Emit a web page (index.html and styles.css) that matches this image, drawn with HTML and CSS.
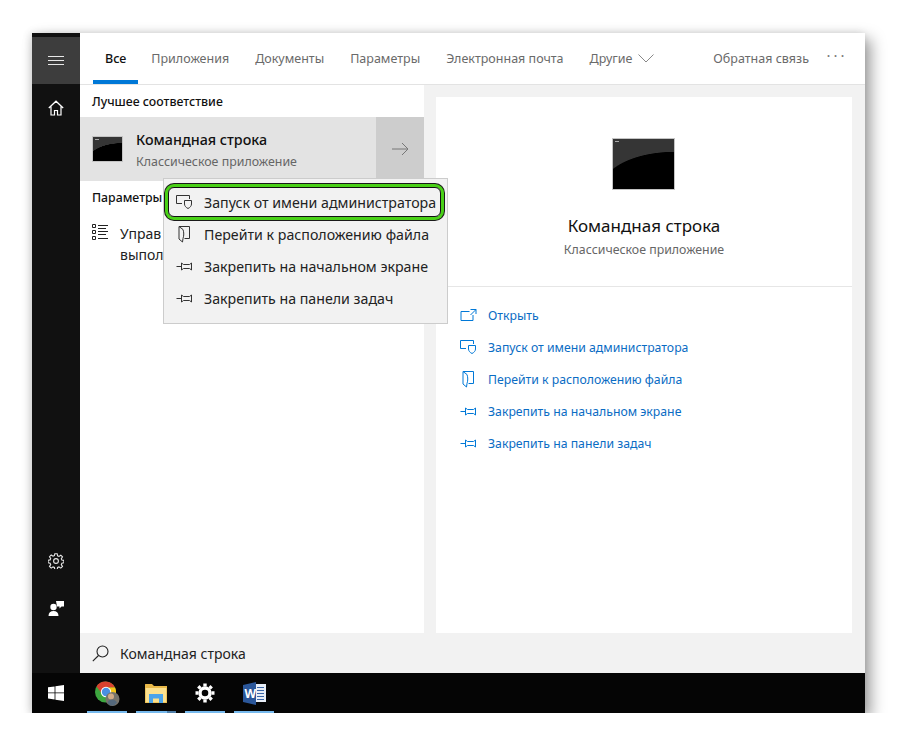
FILE: index.html
```html
<!DOCTYPE html>
<html lang="ru">
<head>
    <meta charset="UTF-8">
    <meta name="viewport" content="width=device-width, initial-scale=1.0">
    <title>Поиск</title>
    <link rel="stylesheet" href="styles.css">
</head>
<body>
<div class="window">
    <div class="upper">
        <nav class="rail">
            <div class="rail-top">
                <div class="burger">
                    <svg width="16" height="10" viewBox="0 0 16 10"><path d="M0 .5h16M0 4.5h16M0 8.5h16" stroke="#e8e8e8" fill="none"/></svg>
                </div>
                <div class="rail-icon">
                    <svg width="16" height="16" viewBox="0 0 16 16" fill="none" stroke="#fff" stroke-width="1.2"><path d="M.8 8 8 1.2 15.2 8M3 6.5V15h3.5v-4.5h3V15H13V6.5"/></svg>
                </div>
            </div>
            <div class="rail-bottom">
                <div class="rail-icon">
                    <svg width="16" height="16" viewBox="0 0 16 16" fill="none" stroke="#e8e8e8" stroke-width="1.1"><circle cx="8" cy="8" r="2.4"/><path d="M6.8.7h2.4l.4 2.1 1.4.6 1.8-1.2 1.7 1.7-1.2 1.8.6 1.4 2 .3v2.4l-2 .4-.6 1.4 1.2 1.8-1.7 1.7-1.8-1.2-1.4.6-.4 2H6.8l-.4-2-1.4-.6-1.8 1.2-1.7-1.7 1.2-1.8-.6-1.4-2-.4V7.2l2-.3.6-1.4-1.2-1.8 1.7-1.7L5 3.2l1.4-.6z"/></svg>
                </div>
                <div class="rail-icon">
                    <svg width="16" height="16" viewBox="0 0 16 16" fill="#fff"><circle cx="5.500" cy="7" r="3.200"/><path d="M.5 16c0-3.400 2-5 5-5s5 1.600 5 5zM8 1h8v5.500h-2.500L11.500 8.500V6.500H9z"/></svg>
                </div>
            </div>
        </nav>
        <div class="main">
            <header class="tabs">
                <div class="tab active">Все</div>
                <div class="tab">Приложения</div>
                <div class="tab">Документы</div>
                <div class="tab">Параметры</div>
                <div class="tab">Электронная почта</div>
                <div class="tab more">Другие
                    <svg width="16" height="9" viewBox="0 0 16 9" fill="none" stroke="#888"><path d="M.5.5 8 8 15.500.5"/></svg>
                </div>
                <div class="tab feedback">Обратная связь</div>
                <div class="dots">···</div>
            </header>
            <div class="panes">
                <section class="results">
                    <h2 class="group-title">Лучшее соответствие</h2>
                    <div class="best">
                        <div class="best-info">
                            <div class="cmd-icon small"></div>
                            <div class="best-text">
                                <div class="best-name">Командная строка</div>
                                <div class="best-kind">Классическое приложение</div>
                            </div>
                        </div>
                        <div class="best-arrow">
                            <svg width="17" height="14" viewBox="0 0 17 14" fill="none" stroke="#777"><path d="M0 7h16M10 1l6 6-6 6"/></svg>
                        </div>
                    </div>
                    <h2 class="group-title second">Параметры</h2>
                    <div class="setting">
                        <svg class="setting-icon" width="16" height="16" viewBox="0 0 16 16" fill="none" stroke="#222"><path d="M.5.5h3v3h-3zM.5 6.500h3v3h-3zM.5 12.500h3v3h-3zM6 1.500h10M6 4.500h8M6 7.500h10M6 10.500h8M6 14.500h10"/></svg>
                        <div class="setting-text">Управ<br>выпол</div>
                    </div>
                </section>
                <section class="detail">
                    <div class="card">
                        <div class="cmd-icon large"></div>
                        <div class="card-name">Командная строка</div>
                        <div class="card-kind">Классическое приложение</div>
                        <ul class="actions">
                            <li>
                                <svg width="16" height="12" viewBox="0 0 16 12" fill="none" stroke="#0078d7"><path d="M9 2.500H.5v9h12V6M10 .5h5.500V5M15.500.5 10 6"/></svg>
                                Открыть
                            </li>
                            <li>
                                <svg width="17" height="14" viewBox="0 0 17 14" fill="none" stroke="#0078d7"><path d="M6 8.500H.5v-8h13V4M8.500 5.500h7v3.500c0 2-1.500 3.500-3.500 4.500-2-1-3.500-2.500-3.500-4.500z"/></svg>
                                Запуск от имени администратора
                            </li>
                            <li>
                                <svg width="13" height="17" viewBox="0 0 13 17" fill="none" stroke="#0078d7"><path d="M1 .5h10.500v12H6.500M1 .5v12.500l3.500 3 .5-3.500c1-3 1-6 0-9z"/></svg>
                                Перейти к расположению файла
                            </li>
                            <li>
                                <svg width="16" height="9" viewBox="0 0 16 9" fill="none" stroke="#0078d7"><path d="M0 4.500h5M5 1v7l2-1.500h6L15 8V1l-2 1.500H7z"/></svg>
                                Закрепить на начальном экране
                            </li>
                            <li>
                                <svg width="16" height="9" viewBox="0 0 16 9" fill="none" stroke="#0078d7"><path d="M0 4.500h5M5 1v7l2-1.500h6L15 8V1l-2 1.500H7z"/></svg>
                                Закрепить на панели задач
                            </li>
                        </ul>
                    </div>
                </section>
                <div class="menu">
                    <div class="menu-item highlight">
                        <svg width="17" height="14" viewBox="0 0 17 14" fill="none" stroke="#333"><path d="M6 8.500H.5v-8h13V4M8.500 5.500h7v3.500c0 2-1.500 3.500-3.500 4.500-2-1-3.500-2.500-3.500-4.500z"/></svg>
                        Запуск от имени администратора
                    </div>
                    <div class="menu-item">
                        <svg width="13" height="17" viewBox="0 0 13 17" fill="none" stroke="#333"><path d="M1 .5h10.500v12H6.500M1 .5v12.500l3.500 3 .5-3.500c1-3 1-6 0-9z"/></svg>
                        Перейти к расположению файла
                    </div>
                    <div class="menu-item">
                        <svg width="16" height="9" viewBox="0 0 16 9" fill="none" stroke="#333"><path d="M0 4.500h5M5 1v7l2-1.500h6L15 8V1l-2 1.500H7z"/></svg>
                        Закрепить на начальном экране
                    </div>
                    <div class="menu-item">
                        <svg width="16" height="9" viewBox="0 0 16 9" fill="none" stroke="#333"><path d="M0 4.500h5M5 1v7l2-1.500h6L15 8V1l-2 1.500H7z"/></svg>
                        Закрепить на панели задач
                    </div>
                </div>
            </div>
            <div class="search">
                <svg width="17" height="17" viewBox="0 0 17 17" fill="none" stroke="#222" stroke-width="1.100"><circle cx="10.500" cy="6.500" r="5.500"/><path d="M6.500 10.500.8 16.200"/></svg>
                <span>Командная строка</span>
            </div>
        </div>
    </div>
    <footer class="taskbar">
        <div class="start">
            <svg width="16" height="16" viewBox="0 0 16 16" fill="#fff"><path d="M0 2.300 6.600 1.400V7.500H0zM7.400 1.300 16 0V7.500H7.400zM0 8.300H6.600V14.500L0 13.600zM7.400 8.300H16V16L7.400 14.700z"/></svg>
        </div>
        <div class="task">
            <svg width="25" height="25" viewBox="0 0 25 25">
                <circle cx="10.500" cy="11" r="10.500" fill="#3da63f"/>
                <path d="M1.500 5.500A10.500 10.500 0 0 1 20 6.500H10.500l-4 5.500z" fill="#d8412f"/>
                <path d="M20 6.500A10.500 10.500 0 0 1 12 21.500l3-7-1-8z" fill="#f5c518"/>
                <circle cx="11" cy="11" r="5.200" fill="#fff"/>
                <circle cx="11" cy="11" r="4.200" fill="#4a90e2"/>
                <circle cx="17.500" cy="18" r="7" fill="#77746c"/>
                <circle cx="16" cy="15.500" r="3" fill="#d2ab86"/>
                <path d="M12.500 22c.5-2.500 2.500-3.500 4.500-3.500s4 1 5 3l-3 3h-4z" fill="#54687c"/>
            </svg>
        </div>
        <div class="task split">
            <svg width="22" height="19" viewBox="0 0 22 19">
                <path d="M0 1c0-1 0-1 1-1h6l2 2h13v17H0z" fill="#e9b949"/>
                <path d="M.7 4h20.600v14.300H.7z" fill="#fbe08e"/>
                <path d="M4 10h14v9h-4v-4.500H8V19H4z" fill="#4aa3ea"/>
            </svg>
        </div>
        <div class="task">
            <svg width="20" height="20" viewBox="0 0 20 20" fill="none" stroke="#fff" stroke-width="3.400"><circle cx="10" cy="10" r="5"/><path d="M10 .5v3M10 16.500v3M.5 10h3M16.500 10h3M3.300 3.300l2.100 2.100M14.600 14.600l2.100 2.100M3.300 16.700l2.100-2.100M14.600 5.400l2.100-2.100"/></svg>
        </div>
        <div class="task">
            <svg width="23" height="23" viewBox="0 0 23 23">
                <path d="M9 2h14v18H9z" fill="#e8eef7"/>
                <path d="M14 5.500h7M14 8.500h7M14 11.500h7M14 14.500h7M14 17.500h7" stroke="#3a66a8"/>
                <path d="M0 3 13 0v23L0 20z" fill="#2b579a"/>
                <text x="1.500" y="15.500" class="word-w">W</text>
            </svg>
        </div>
    </footer>
</div>
</body>
</html>
```
FILE: styles.css
```css
* {
    box-sizing: border-box;
}

body {
    margin: 0;
    background-color: #fff;
    font-family: "Noto Sans", Arial, sans-serif;
    font-size: 12.5px;
    color: #1a1a1a;
}

.window {
    width: 833px;
    height: 680px;
    margin: 33px 0 0 32px;
    display: flex;
    flex-direction: column;
    box-shadow: 6px 6px 14px rgba(0, 0, 0, 0.38), -2px 0 8px rgba(0, 0, 0, 0.12);
}

.upper {
    display: flex;
    height: 640px;
}

/* left black strip */
.rail {
    width: 48px;
    background-color: #111;
    display: flex;
    flex-direction: column;
    justify-content: space-between;
    padding: 4px 0 42px;
}

.burger {
    height: 47px;
    background-color: #3d3d3d;
    display: flex;
    align-items: center;
    justify-content: center;
}

.rail-icon {
    height: 48px;
    display: flex;
    align-items: center;
    justify-content: center;
}

.rail-bottom .rail-icon {
    height: 47px;
}

.main {
    flex: 1;
    display: flex;
    flex-direction: column;
    background-color: #fff;
    min-width: 0;
}

.tabs {
    height: 52px;
    display: flex;
    align-items: stretch;
    padding-left: 13px;
    border-bottom: 1px solid #e3e3e3;
    color: #6a6a6a;
}

.tab {
    display: flex;
    align-items: center;
    gap: 6px;
    padding: 0 13px;
    white-space: nowrap;
}

.tab.active {
    color: #111;
    font-weight: 500;
    box-shadow: inset 0 -4px 0 #0078d7;
    padding: 0 12px;
}

.tab.feedback {
    margin-left: auto;
    padding: 0;
}

.dots {
    width: 56px;
    text-align: center;
    line-height: 44px;
    font-size: 15px;
    letter-spacing: 3px;
    color: #777;
}

.panes {
    flex: 1;
    display: flex;
    position: relative;
    min-height: 0;
}

.results {
    width: 344px;
}

.group-title {
    margin: 0;
    padding: 8px 12px 0;
    height: 32px;
    font-size: 12.3px;
    font-weight: 500;
    color: #111;
}

.group-title.second {
    height: 44px;
}

.best {
    height: 64px;
    display: flex;
    background-color: #e3e3e3;
}

.best-info {
    flex: 1;
    display: flex;
    align-items: center;
    gap: 13px;
    padding-left: 12px;
}

.best-text {
    padding-top: 2px;
}

.best-name {
    font-size: 14.3px;
    font-weight: 500;
    color: #111;
}

.best-kind {
    margin-top: 4px;
    font-size: 12.4px;
    color: #666;
}

.best-arrow {
    width: 48px;
    background-color: #cdcdcd;
    display: flex;
    align-items: center;
    justify-content: center;
}

/* screenshot of the console icon */
.cmd-icon {
    border: 1px solid #c4c4c4;
    background:
        linear-gradient(#aaa, #aaa) 2px 2px / 4px 1px no-repeat,
        radial-gradient(ellipse 120% 75% at 100% 100%, #000 98%, #353535 100%);
}

.cmd-icon.small {
    width: 31px;
    height: 26px;
}

.cmd-icon.large {
    width: 63px;
    height: 52px;
    margin: 41px 2px 0 0;
}

.setting {
    display: flex;
    gap: 12px;
    padding-left: 12px;
    margin-top: -2px;
    line-height: 21px;
    font-size: 14px;
    color: #222;
}

.setting-icon {
    margin-top: 1px;
    flex: none;
}

.detail {
    flex: 1;
    background-color: #f2f2f2;
    padding: 12px 13px 0 12px;
}

.card {
    height: 100%;
    background-color: #fff;
    display: flex;
    flex-direction: column;
    align-items: center;
}

.card-name {
    margin-top: 24px;
    font-size: 17px;
    color: #111;
}

.card-kind {
    margin-top: 4px;
    font-size: 12.35px;
    color: #666;
}

.actions {
    list-style: none;
    margin: 28px 0 0;
    padding: 12px 0 0 24px;
    width: 100%;
    border-top: 1px solid #e6e6e6;
    color: #0a6cc4;
    font-size: 12.25px;
}

.actions li {
    height: 32px;
    display: flex;
    align-items: center;
    gap: 11px;
}

.actions svg {
    width: 17px;
    flex: none;
}

.menu {
    position: absolute;
    left: 83px;
    top: 93px;
    width: 285px;
    height: 146px;
    padding: 7px 6px 0 4px;
    background-color: #f2f2f2;
    border: 1px solid #ccc;
}

.menu-item {
    height: 32px;
    display: flex;
    align-items: center;
    gap: 11px;
    padding-left: 8px;
    font-size: 14.2px;
    color: #222;
    white-space: nowrap;
}

.menu-item svg {
    width: 17px;
    flex: none;
}

.menu-item.highlight {
    height: 30px;
    margin: 1px 0;
    padding-left: 7px;
    border: 1px solid #111;
    border-radius: 6px;
    box-shadow: 0 0 0 3px #49d017, 0 0 0 4px #1a1a1a;
}

.search {
    height: 40px;
    background-color: #f2f2f2;
    display: flex;
    align-items: center;
    gap: 11px;
    padding-left: 12px;
    font-size: 14px;
    color: #222;
}

.taskbar {
    height: 40px;
    background-color: #050505;
    display: flex;
    align-items: stretch;
    gap: 9px;
}

.start {
    width: 46px;
    padding-left: 2px;
    display: flex;
    align-items: center;
    justify-content: center;
}

.task {
    width: 40px;
    display: flex;
    align-items: center;
    justify-content: center;
    background: linear-gradient(#76b9ed, #76b9ed) bottom / 100% 2px no-repeat;
}

.task.split {
    background: linear-gradient(90deg, #76b9ed 31px, #4f7ea8 31px) bottom / 100% 2px no-repeat;
}

.word-w {
    font-size: 12px;
    font-weight: 700;
    fill: #fff;
}
```
